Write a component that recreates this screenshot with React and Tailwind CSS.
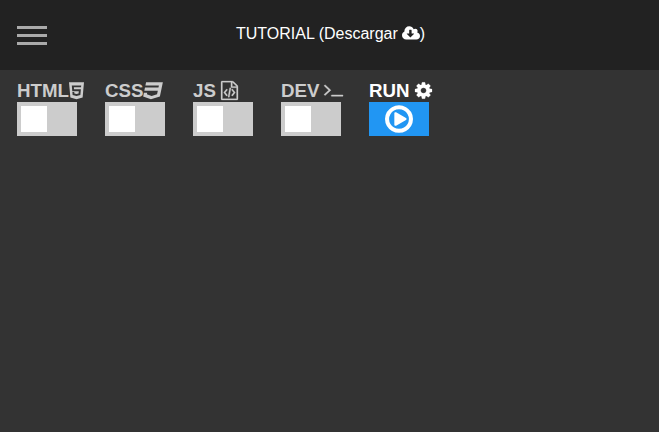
const PATHS = {
  html: ['0 0 1408 1792', 'M1130 597l16-175h-884l47 534h612l-22 228-197 53-196-53-13-140h-175l22 278 362 100h4v-1l359-99 50-544h-644l-15-181h674zm-1130-469h1408l-128 1438-578 162-574-162z'],
  css: ['0 0 1792 1792', 'M275 128h1505l-266 1333-804 267-698-267 71-356h297l-29 147 422 161 486-161 68-339h-1208l58-297h1209l38-191h-1208z'],
  js: ['0 0 1536 1792', 'M1468 380q28 28 48 76t20 88v1152q0 40-28 68t-68 28h-1344q-40 0-68-28t-28-68v-1600q0-40 28-68t68-28h896q40 0 88 20t76 48zm-444-244v376h376q-10-29-22-41l-313-313q-12-12-41-22zm384 1528v-1024h-416q-40 0-68-28t-28-68v-416h-768v1536h1280zm-928-896q8-11 21-12.5t24 6.5l51 38q11 8 12.5 21t-6.5 24l-182 243 182 243q8 11 6.5 24t-12.5 21l-51 38q-11 8-24 6.5t-21-12.5l-226-301q-14-19 0-38zm802 301q14 19 0 38l-226 301q-8 11-21 12.5t-24-6.5l-51-38q-11-8-12.5-21t6.5-24l182-243-182-243q-8-11-6.5-24t12.5-21l51-38q11-8 24-6.5t21 12.5zm-620 461q-13-2-20.5-13t-5.5-24l138-831q2-13 13-20.5t24-5.5l63 10q13 2 20.5 13t5.5 24l-138 831q-2 13-13 20.5t-24 5.5z'],
  dev: ['64 0 1664 1792', 'M649 983l-466 466q-10 10-23 10t-23-10l-50-50q-10-10-10-23t10-23l393-393-393-393q-10-10-10-23t10-23l50-50q10-10 23-10t23 10l466 466q10 10 10 23t-10 23zm1079 457v64q0 14-9 23t-23 9h-960q-14 0-23-9t-9-23v-64q0-14 9-23t23-9h960q14 0 23 9t9 23z'],
  cog: ['0 0 1536 1792', 'M1024 896q0-106-75-181t-181-75-181 75-75 181 75 181 181 75 181-75 75-181zm512-109v222q0 12-8 23t-20 13l-185 28q-19 54-39 91 35 50 107 138 10 12 10 25t-9 23q-27 37-99 108t-94 71q-12 0-26-9l-138-108q-44 23-91 38-16 136-29 186-7 28-36 28h-222q-14 0-24.5-8.5t-11.5-21.5l-28-184q-49-16-90-37l-141 107q-10 9-25 9-14 0-25-11-126-114-165-168-7-10-7-23 0-12 8-23 15-21 51-66.5t54-70.5q-27-50-41-99l-183-27q-13-2-21-12.5t-8-23.5v-222q0-12 8-23t19-13l186-28q14-46 39-92-40-57-107-138-10-12-10-24 0-10 9-23 26-36 98.5-107.5t94.5-71.5q13 0 26 10l138 107q44-23 91-38 16-136 29-186 7-28 36-28h222q14 0 24.5 8.5t11.5 21.5l28 184q49 16 90 37l142-107q9-9 24-9 13 0 25 10 129 119 165 170 7 8 7 22 0 12-8 23-15 21-51 66.5t-54 70.5q26 50 41 98l183 28q13 2 21 12.5t8 23.5z'],
  cloud: ['-64 0 1920 1792', 'M1216 928q0-14-9-23t-23-9h-224v-352q0-13-9.5-22.5t-22.5-9.5h-192q-13 0-22.5 9.5t-9.5 22.5v352h-224q-13 0-22.5 9.5t-9.5 22.5q0 14 9 23l352 352q9 9 23 9t23-9l351-351q10-12 10-24zm640 224q0 159-112.5 271.5t-271.5 112.5h-1088q-185 0-316.5-131.5t-131.5-316.5q0-130 70-240t188-165q-2-30-2-43 0-212 150-362t362-150q156 0 285.5 87t188.5 231q71-62 166-62 106 0 181 75t75 181q0 76-41 138 130 31 213.5 135.5t83.5 238.5z'],
  play: ['0 0 1536 1792', 'M1184 896q0 37-32 55l-544 320q-15 9-32 9-16 0-32-8-32-19-32-56v-640q0-37 32-56 33-18 64 1l544 320q32 18 32 55zm128 0q0-148-73-273t-198-198-273-73-273 73-198 198-73 273 73 273 198 198 273 73 273-73 198-198 73-273zm224 0q0 209-103 385.5t-279.5 279.5-385.5 103-385.5-103-279.5-279.5-103-385.5 103-385.5 279.5-279.5 385.5-103 385.5 103 279.5 279.5 103 385.5z'],
};

function Icon({ name, className }) {
  const [viewBox, d] = PATHS[name];
  return (
    <svg
      viewBox={viewBox}
      preserveAspectRatio="none"
      className={`shrink-0 overflow-visible ${className}`}
      fill="currentColor"
      stroke="currentColor"
      strokeWidth="0"
      aria-hidden="true"
    >
      <path d={d} />
    </svg>
  );
}

const PANELS = [
  { label: 'HTML', icon: 'html', iconClass: 'h-[19px] w-[15px]' },
  { label: 'CSS', icon: 'css', iconClass: 'h-[19px] w-[20px]' },
  { label: 'JS', icon: 'js', iconClass: 'ml-[5px] h-[19px] w-[17px] [stroke-width:25]' },
  { label: 'DEV', icon: 'dev', iconClass: 'mb-[2px] ml-[5px] h-[19px] w-[19px] [stroke-width:35]' },
];

function Heading({ label, icon, iconClass }) {
  return (
    <h3 className="flex h-6 items-center text-[18.72px] leading-6 font-bold whitespace-nowrap">
      <span className="pt-[2px]">{label}</span>
      <Icon name={icon} className={iconClass} />
    </h3>
  );
}

export default function App() {
  return (
    <div className="flex h-screen flex-col overflow-hidden bg-[#333] font-['Liberation_Sans',Arial,sans-serif]">
      <header className="grid h-[70px] shrink-0 grid-cols-[219px_1fr] bg-[#222]">
        <button className="flex flex-col gap-[5px] pt-[26px] pl-[17px]" aria-label="Menu">
          <span className="h-[3px] w-[30px] bg-[#aaa]" />
          <span className="h-[3px] w-[30px] bg-[#aaa]" />
          <span className="h-[3px] w-[30px] bg-[#aaa]" />
        </button>
        <div className="flex h-[68px] items-center pl-[17px] text-base leading-6 whitespace-nowrap text-white">
          <span>TUTORIAL (Descargar</span>
          <Icon name="cloud" className="mb-[2px] ml-1 h-[17px] w-[18px]" />
          <span>)</span>
        </div>
      </header>
      <main className="flex gap-7 px-[17px] pt-2">
        {PANELS.map((p) => (
          <div key={p.label} className="w-[60px] text-[#ccc]">
            <Heading {...p} />
            <div className="h-[34px] bg-[#ccc] p-1">
              <div className="h-[26px] w-[26px] bg-white" />
            </div>
          </div>
        ))}
        <div className="w-[60px] text-white">
          <Heading label="RUN" icon="cog" iconClass="ml-[5px] h-[19px] w-[17px] [stroke-width:20]" />
          <button className="flex h-[34px] w-full items-center justify-center bg-[#2196f3]" aria-label="Run">
            <Icon name="play" className="h-8 w-7" />
          </button>
        </div>
      </main>
    </div>
  );
}
